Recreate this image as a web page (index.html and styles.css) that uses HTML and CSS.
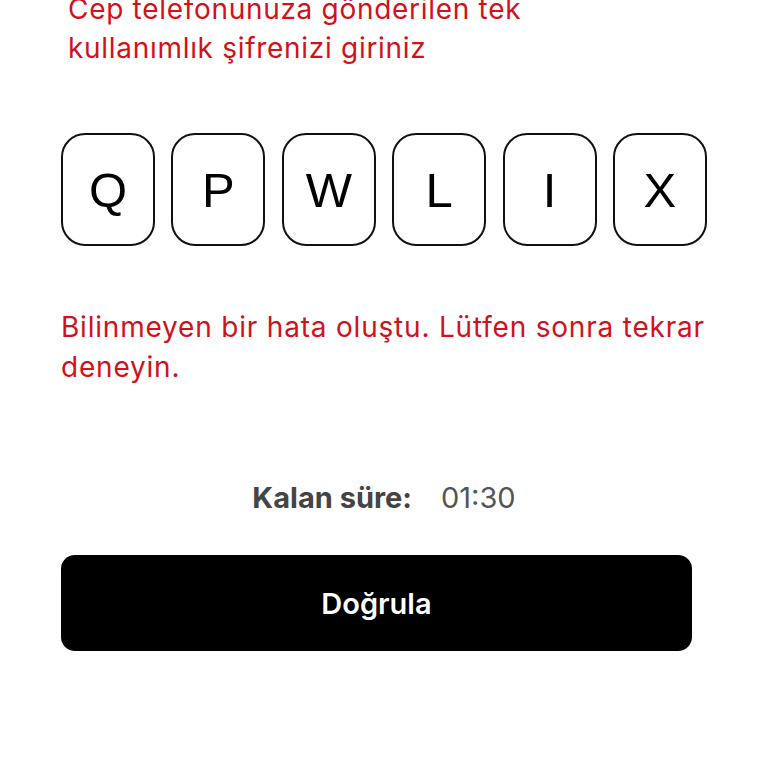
FILE: index.html
```html
<!DOCTYPE html>
<html lang="tr">
<head>
<meta charset="utf-8">
<link rel="stylesheet" href="styles.css">
</head>
<body>
<main class="page">
  <p class="intro">Cep telefonunuza gönderilen tek kullanımlık şifrenizi giriniz</p>
  <div class="code">
    <div class="cell">Q</div>
    <div class="cell">P</div>
    <div class="cell">W</div>
    <div class="cell">L</div>
    <div class="cell">I</div>
    <div class="cell">X</div>
  </div>
  <p class="error">Bilinmeyen bir hata oluştu. Lütfen sonra tekrar deneyin.</p>
  <div class="timer"><span class="timer-label">Kalan süre:</span><span class="timer-value">01:30</span></div>
  <button class="verify">Doğrula</button>
</main>
</body>
</html>
```
FILE: styles.css
```css
html, body {
  margin: 0;
  padding: 0;
  background: #ffffff;
}
body {
  font-family: Inter, "Noto Sans", sans-serif;
  overflow: hidden;
}
.page {
  width: 646px;
  margin-left: 61px;
  display: flex;
  flex-direction: column;
}
.intro {
  margin: -10px 0 0 7px;
  width: 500px;
  font-size: 28px;
  line-height: 39px;
  letter-spacing: 0.7px;
  color: #d1111b;
}
.code {
  margin-top: 65px;
  display: flex;
  justify-content: space-between;
}
.cell {
  width: 90px;
  height: 109px;
  border: 2px solid #111;
  border-radius: 24px;
  display: flex;
  align-items: center;
  justify-content: center;
  font-family: "Liberation Sans", Arial, sans-serif;
  font-size: 49px;
  color: #000;
}
.error {
  margin: 61px 0 0 0;
  font-size: 28px;
  line-height: 40px;
  letter-spacing: 0.8px;
  color: #d1111b;
}
.timer {
  margin-top: 93px;
  display: flex;
  justify-content: center;
  gap: 29px;
  font-size: 29px;
  line-height: 36px;
}
.timer-label {
  font-weight: 700;
  color: #444;
}
.timer-value {
  font-weight: 400;
  color: #555;
}
.verify {
  margin-top: 39px;
  width: 631px;
  height: 96px;
  border: none;
  border-radius: 14px;
  background: #000;
  color: #fff;
  font-family: Inter, "Noto Sans", sans-serif;
  font-weight: 600;
  font-size: 29px;
  padding: 0;
}
```
